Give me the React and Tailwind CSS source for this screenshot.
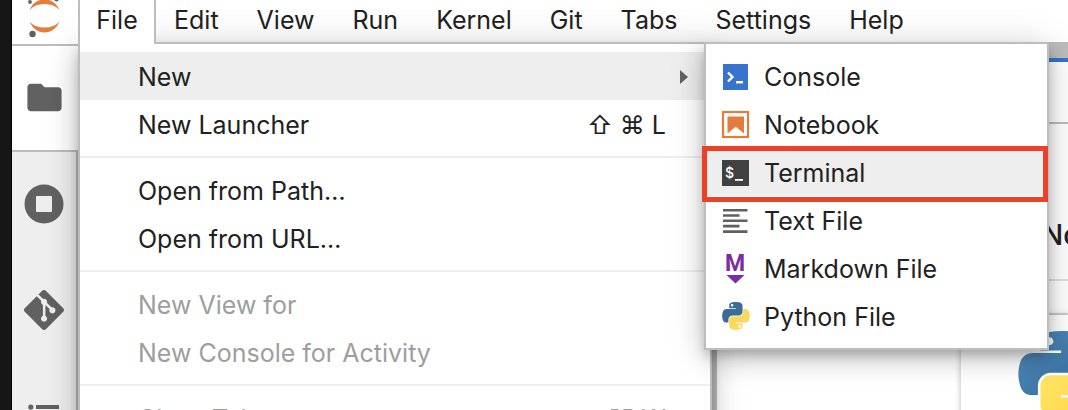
import React from 'react';
import { MdFolder } from 'react-icons/md';
import { SiGit } from 'react-icons/si';

const PY_BLUE =
  'M54.9 0C50.3 0 46 .4 42.1 1.1 30.8 3.1 28.7 7.3 28.7 15v10.25h26.8v3.4H18.6c-7.8 0-14.6 4.7-16.7 13.6-2.5 10.2-2.6 16.6 0 27.25 1.9 7.9 6.4 13.6 14.2 13.6h9.25V70.8c0-8.8 7.65-16.6 16.75-16.6h26.8c7.4 0 13.4-6.2 13.4-13.6V15c0-7.3-6.1-12.7-13.4-13.9C64.3.3 59.5 0 54.9 0zM40.4 8.2c2.8 0 5.05 2.3 5.05 5.1s-2.25 5.1-5.05 5.1-5-2.3-5-5.1 2.2-5.1 5-5.1z';
const PY_YELLOW =
  'M85.6 28.65v11.9c0 9.25-7.8 17-16.7 17H42.1c-7.3 0-13.4 6.3-13.4 13.6v25.55c0 7.3 6.3 11.5 13.4 13.6 8.5 2.5 16.6 2.95 26.8 0 6.7-1.9 13.4-5.9 13.4-13.6V86.5H55.5v-3.4h40.2c7.8 0 10.7-5.4 13.4-13.6 2.8-8.4 2.7-16.5 0-27.25-1.9-7.75-5.6-13.6-13.4-13.6zM70.6 93.3c2.8 0 5 2.3 5 5.1s-2.2 5.1-5 5.1-5.05-2.3-5.05-5.1 2.25-5.1 5.05-5.1z';

function PythonLogo({ className, gradient }) {
  return (
    <svg viewBox="0 0 112 113" className={className} aria-hidden="true">
      <defs>
        <linearGradient id="pyBlue" x1="0" y1="0" x2="1" y2="1">
          <stop offset="0" stopColor="#5a9fd4" />
          <stop offset="0.15" stopColor="#5189ba" />
          <stop offset="1" stopColor="#306998" />
        </linearGradient>
        <linearGradient id="pyYellow" x1="1" y1="1" x2="0" y2="0">
          <stop offset="0" stopColor="#ffd43b" />
          <stop offset="1" stopColor="#ffe873" />
        </linearGradient>
      </defs>
      <path d={PY_BLUE} fill={gradient ? 'url(#pyBlue)' : '#3d6c98'} />
      <path d={PY_YELLOW} fill={gradient ? 'url(#pyYellow)' : '#fad85a'} />
    </svg>
  );
}

function IconBox({ children }) {
  return (
    <svg viewBox="0 0 28 28" className="size-7 shrink-0 overflow-visible" aria-hidden="true">
      {children}
    </svg>
  );
}

const icons = {
  console: (
    <IconBox>
      <rect x="1" y="2" width="25" height="26" fill="#3873cd" />
      <path d="M6 10.5l4.5 4.500L6 19.500" fill="none" stroke="#fff" strokeWidth="2.4" />
      <rect x="14" y="19" width="7" height="2.4" fill="#fff" />
    </IconBox>
  ),
  notebook: (
    <IconBox>
      <rect x="1" y="2" width="25" height="25" fill="none" stroke="#e37c3d" strokeWidth="2.2" />
      <path d="M5.500 6.500h16.500v17l-8.300-6.700-8.200 6.700z" fill="#e37c3d" />
    </IconBox>
  ),
  terminal: (
    <IconBox>
      <rect x="0" y="2" width="27" height="26" fill="#414141" />
      <text x="3" y="20" fill="#fff" fontSize="14" fontWeight="500" fontFamily="Inter, sans-serif">$</text>
      <rect x="13" y="21" width="8" height="1.8" fill="#fff" />
    </IconBox>
  ),
  text: (
    <IconBox>
      <path
        d="M1 4.200h24.500M1 9.500h16.500M1 14.800h24.500M1 20.100h16.500M1 25.600h24.500"
        stroke="#616161"
        strokeWidth="2.6"
      />
    </IconBox>
  ),
  markdown: (
    <IconBox>
      <text x="13" y="17" textAnchor="middle" fill="#7b2ba4" fontSize="23" fontWeight="700" fontFamily="Roboto, sans-serif">M</text>
      <path d="M4.500 21h18l-9 8.500z" fill="#7b2ba4" />
    </IconBox>
  ),
  python: <PythonLogo className="size-7 shrink-0" />,
};

const menuNames = ['Edit', 'View', 'Run', 'Kernel', 'Git', 'Tabs', 'Settings', 'Help'];

const newItems = [
  ['Console', 'console'],
  ['Notebook', 'notebook'],
  ['Terminal', 'terminal'],
  ['Text File', 'text'],
  ['Markdown File', 'markdown'],
  ['Python File', 'python'],
];

function MenuItem({ label, shortcut, submenu, active, disabled }) {
  return (
    <button
      type="button"
      role="menuitem"
      disabled={disabled}
      aria-haspopup={submenu ? 'menu' : undefined}
      className={
        'flex h-12 w-full shrink-0 items-center justify-between pt-0.5 pl-[58px] text-left ' +
        (submenu ? 'pr-[22px] ' : 'pr-11 ') +
        (active ? 'bg-[#eeeeee] ' : '') +
        (disabled ? 'text-[#9e9e9e]' : '')
      }
    >
      <span>{label}</span>
      {shortcut && <span>{shortcut}</span>}
      {submenu && (
        <svg viewBox="0 0 8 14" className="h-3.5 w-2" aria-hidden="true">
          <path d="M0 0l8 7-8 7z" fill="#616161" />
        </svg>
      )}
    </button>
  );
}

function Separator() {
  return <div role="separator" className="my-2 h-0.5 shrink-0 bg-[#eeeeee]" />;
}

const popup =
  'absolute border-2 border-[#bdbdbd] bg-white shadow-[0_6px_10px_-2px_rgba(0,0,0,0.2),0_10px_22px_0_rgba(0,0,0,0.16),0_2px_36px_0_rgba(0,0,0,0.14)]';

function Sidebar() {
  return (
    <aside className="flex w-[66px] shrink-0 flex-col bg-[#eeeeee]">
      <div className="h-[46px] shrink-0 border-b-2 border-[#bdbdbd] bg-white">
        <svg viewBox="0 0 66 44" className="h-11 w-full" aria-hidden="true">
          <path d="M17.500 10C21 2.500 26-.5 32.500-.5S44 2.500 47.500 10C44 6 39 4 32.500 4S21 6 17.500 10z" fill="#e37c3d" />
          <path d="M17.500 21.500C21 25.500 26 27.500 32.500 27.500S44 25.500 47.500 21.500C44 29 39 32.500 32.500 32.500S21 29 17.500 21.500z" fill="#e37c3d" />
          <circle cx="20.500" cy="34" r="3.200" fill="#616161" />
          <circle cx="18" cy="2" r="1.900" fill="#616161" />
          <circle cx="44.500" cy="-1" r="2.400" fill="#616161" />
        </svg>
      </div>
      <button type="button" aria-label="File Browser" className="flex h-[106px] shrink-0 items-center justify-center border-b-2 border-[#bdbdbd] bg-white pr-0.5 pb-0.5">
        <MdFolder size={41} color="#616161" />
      </button>
      <div className="flex flex-1 flex-col border-r-2 border-[#bdbdbd]">
        <button type="button" aria-label="Running Terminals and Kernels" className="flex h-[106px] shrink-0 items-center justify-center pb-0.5">
          <svg viewBox="0 0 40 40" className="size-10" aria-hidden="true">
            <circle cx="20" cy="20" r="19.500" fill="#616161" />
            <rect x="12" y="12" width="16" height="16" rx="1" fill="#eeeeee" />
          </svg>
        </button>
        <button type="button" aria-label="Git" className="flex h-[106px] shrink-0 items-center justify-center pb-0.5">
          <SiGit size={40} color="#616161" />
        </button>
        <button type="button" aria-label="Table of Contents" className="flex h-[106px] shrink-0 items-center justify-center pb-0.5">
          <svg viewBox="0 0 32 26" className="h-[26px] w-8" aria-hidden="true">
            <g fill="#616161">
              <circle cx="2.800" cy="4" r="2.600" />
              <circle cx="2.800" cy="13" r="2.600" />
              <circle cx="2.800" cy="22" r="2.600" />
              <rect x="8" y="2" width="23" height="4" />
              <rect x="8" y="11" width="23" height="4" />
              <rect x="8" y="20" width="23" height="4" />
            </g>
          </svg>
        </button>
      </div>
    </aside>
  );
}

function Launcher() {
  return (
    <main className="flex min-w-0 flex-1 flex-col">
      <div className="h-3.5 shrink-0 bg-[#bdbdbd]" />
      <div className="h-[66px] shrink-0 border-t-4 border-b-2 border-t-[#3873cd] border-b-[#bdbdbd] bg-white" />
      <div className="flex h-[157px] shrink-0 items-end justify-end border-b-2 border-[#e0e0e0] pb-7">
        <h2 className="w-[26px] text-[28px] leading-8 font-medium whitespace-nowrap">Notebook</h2>
      </div>
      <div className="h-[34px] shrink-0 border-b-2 border-[#e0e0e0]" />
      <div className="flex flex-1 justify-end">
        <section className="w-[107px] bg-white pt-4 pl-[57px] shadow-[0_0_6px_rgba(0,0,0,0.3)]">
          <PythonLogo gradient className="size-[87px] max-w-none" />
        </section>
      </div>
    </main>
  );
}

export default function App() {
  return (
    <div className="flex h-screen overflow-hidden bg-white font-['Inter','Noto_Sans',sans-serif] text-[25px] leading-8 text-[#212121]">
      <div className="w-3 shrink-0 border-r border-black bg-[#151618]" />
      <Sidebar />
      <div className="relative flex min-w-0 flex-1 flex-col">
        <nav aria-label="Main menu" className="flex h-11 shrink-0 border-b-2 border-[#bdbdbd] bg-white">
          <button type="button" aria-expanded="true" className="relative z-10 -mb-0.5 flex w-[78px] shrink-0 justify-center border-x-2 border-[#bdbdbd] bg-white pt-1">
            File
          </button>
          <div className="flex gap-[38px] pl-[18px]">
            {menuNames.map((name) => (
              <button key={name} type="button" className="flex pt-1">
                {name}
              </button>
            ))}
          </div>
        </nav>
        <div className="flex min-h-0 flex-1">
          <div className="w-[634px] shrink-0" />
          <div className="w-[5px] shrink-0 bg-[#bdbdbd]" />
          <Launcher />
        </div>

        <div role="menu" aria-label="File" className={popup + ' top-[42px] left-0 w-[634px] py-2'}>
          <MenuItem label="New" submenu active />
          <MenuItem label="New Launcher" shortcut="⇧ ⌘ L" />
          <Separator />
          <MenuItem label="Open from Path…" />
          <MenuItem label="Open from URL…" />
          <Separator />
          <MenuItem label="New View for" disabled />
          <MenuItem label="New Console for Activity" disabled />
          <Separator />
          <MenuItem label="Close Tab" shortcut="⌥ W" disabled />
        </div>

        <div role="menu" aria-label="New" className={popup + ' top-[42px] left-[626px] w-[345px] py-2'}>
          {newItems.map(([label, icon]) => (
            <button
              key={label}
              type="button"
              role="menuitem"
              className={
                'relative flex h-12 w-full items-center gap-3.5 pl-4 text-left ' +
                (label === 'Terminal' ? 'bg-[#eeeeee]' : '')
              }
            >
              {icons[icon]}
              <span className="pt-0.5">{label}</span>
              {label === 'Terminal' && (
                <span className="pointer-events-none absolute -top-0.5 -right-px -bottom-1.5 -left-1 z-10 border-[5px] border-[#ec4126]" />
              )}
            </button>
          ))}
        </div>
      </div>
    </div>
  );
}
